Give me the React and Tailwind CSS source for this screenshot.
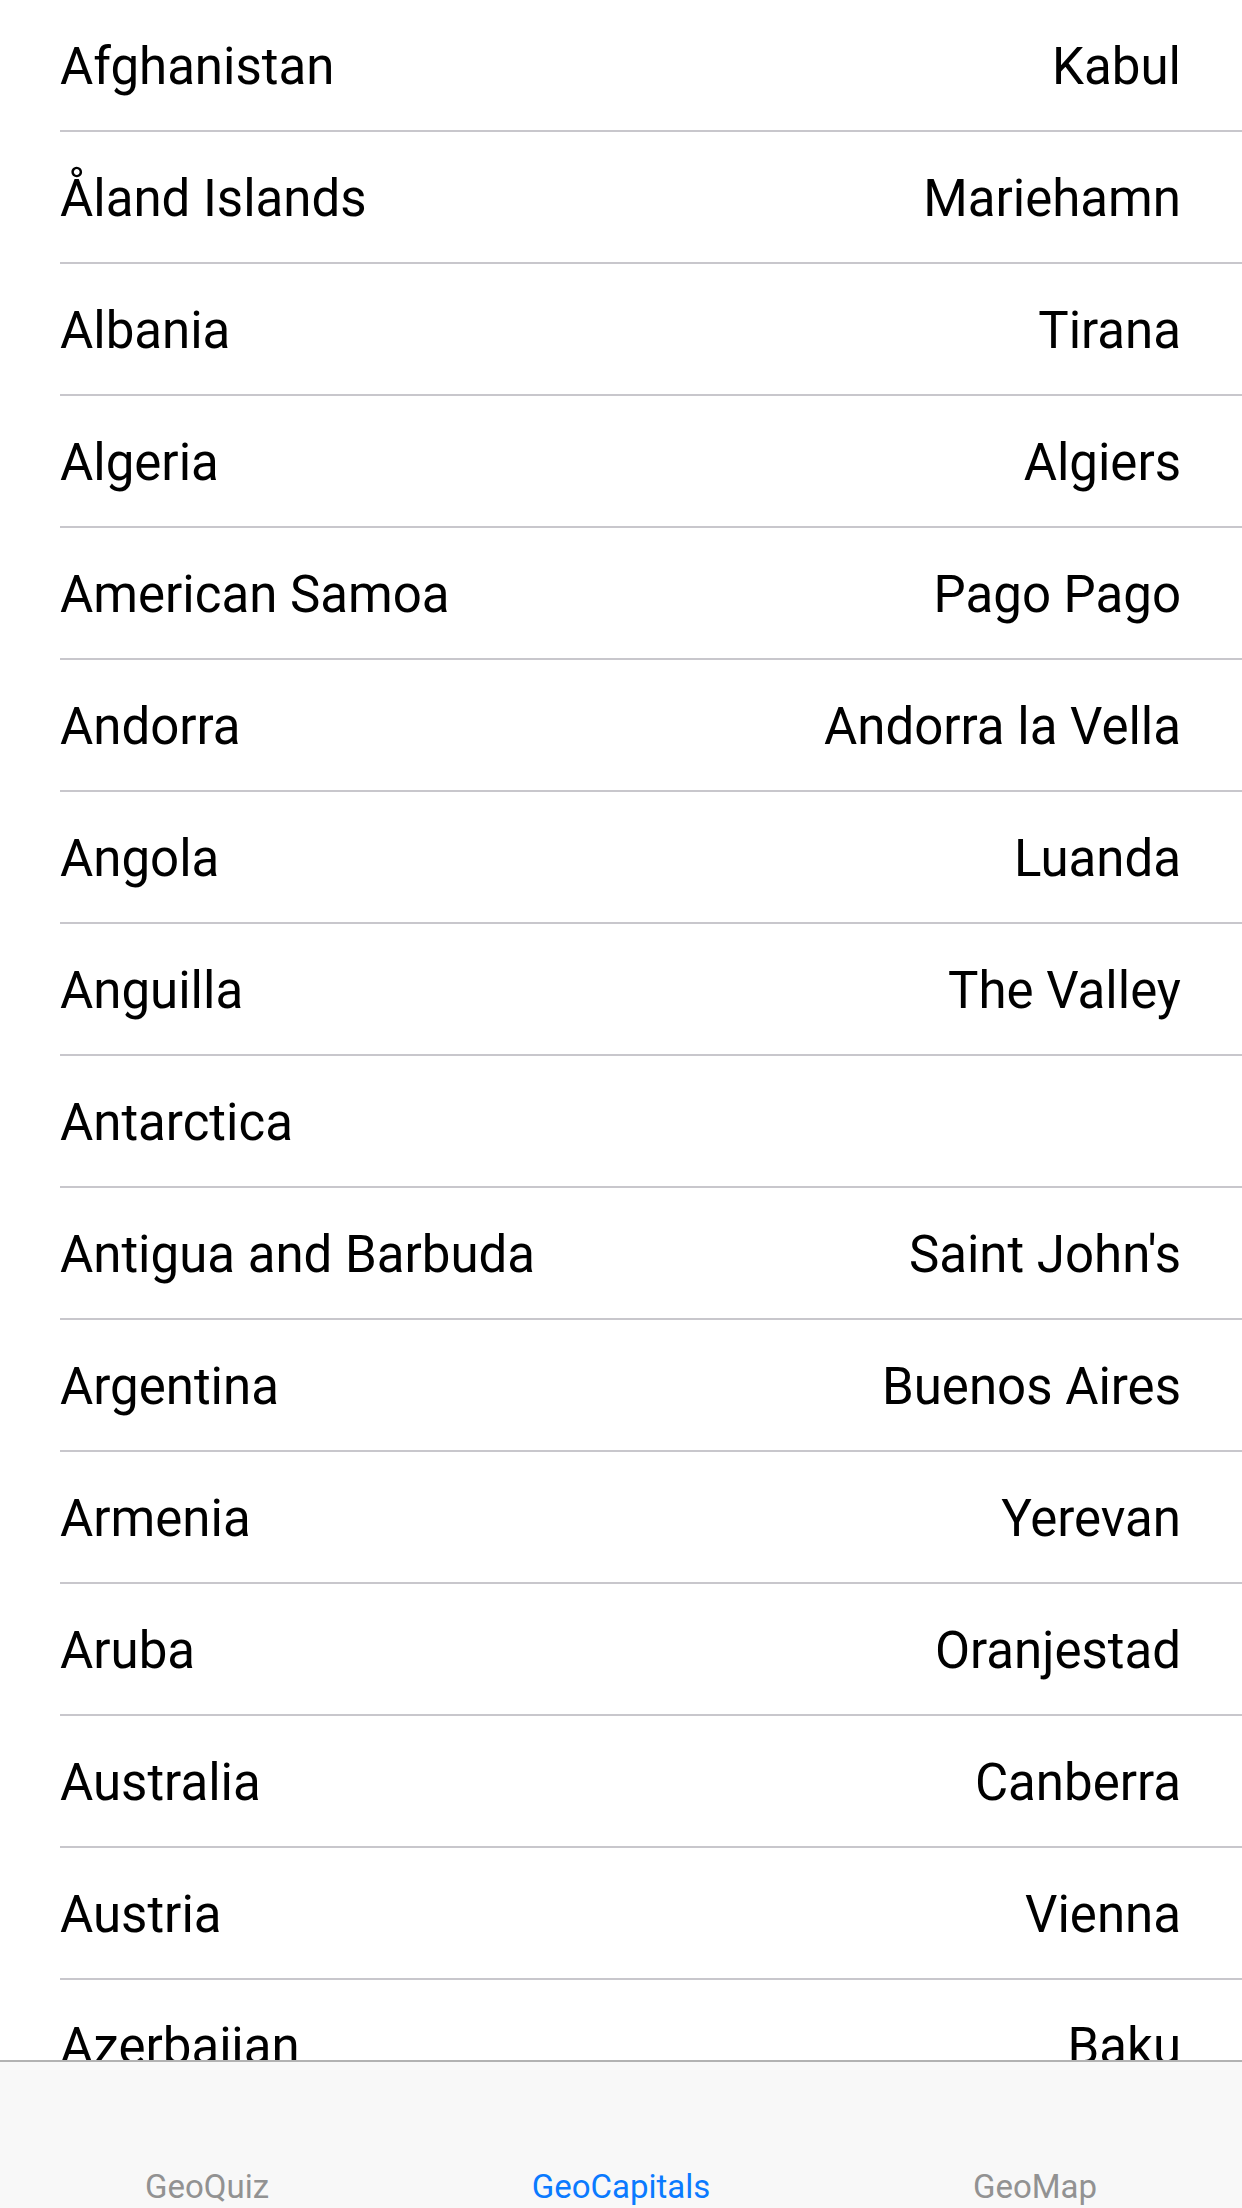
import React from 'react';

const COUNTRIES = [
  ['Afghanistan', 'Kabul'],
  ['Åland Islands', 'Mariehamn'],
  ['Albania', 'Tirana'],
  ['Algeria', 'Algiers'],
  ['American Samoa', 'Pago Pago'],
  ['Andorra', 'Andorra la Vella'],
  ['Angola', 'Luanda'],
  ['Anguilla', 'The Valley'],
  ['Antarctica', ''],
  ['Antigua and Barbuda', "Saint John's"],
  ['Argentina', 'Buenos Aires'],
  ['Armenia', 'Yerevan'],
  ['Aruba', 'Oranjestad'],
  ['Australia', 'Canberra'],
  ['Austria', 'Vienna'],
  ['Azerbaijan', 'Baku'],
  ['Bahamas', 'Nassau'],
];

const TABS = [
  { label: 'GeoQuiz' },
  { label: 'GeoCapitals', active: true },
  { label: 'GeoMap' },
];

function Row({ country, capital }) {
  return (
    <div className="pl-[60px] shrink-0">
      <div className="h-[132px] flex items-center justify-between pt-[3px] pr-[61px] border-b-2 border-[#c8c7cc]">
        <span>{country}</span>
        <span>{capital}</span>
      </div>
    </div>
  );
}

export default function App() {
  return (
    <div
      className="h-[2208px] w-[1242px] flex flex-col bg-white text-black overflow-hidden"
      style={{ fontFamily: 'Roboto, "Liberation Sans", sans-serif' }}
    >
      {/* Lista de países */}
      <div className="flex-1 overflow-hidden flex flex-col text-[51px] leading-none">
        {COUNTRIES.map(([country, capital]) => (
          <Row key={country} country={country} capital={capital} />
        ))}
      </div>

      {/* Barra de pestañas */}
      <nav className="h-[148px] shrink-0 bg-[#f8f8f8] border-t-2 border-[#b2b2b2] grid grid-cols-3">
        {TABS.map((t) => (
          <div
            key={t.label}
            className={`flex items-end justify-center pb-px text-[33px] leading-[40px] ${
              t.active ? 'text-[#0a7aff]' : 'text-[#929292]'
            }`}
          >
            {t.label}
          </div>
        ))}
      </nav>
    </div>
  );
}
